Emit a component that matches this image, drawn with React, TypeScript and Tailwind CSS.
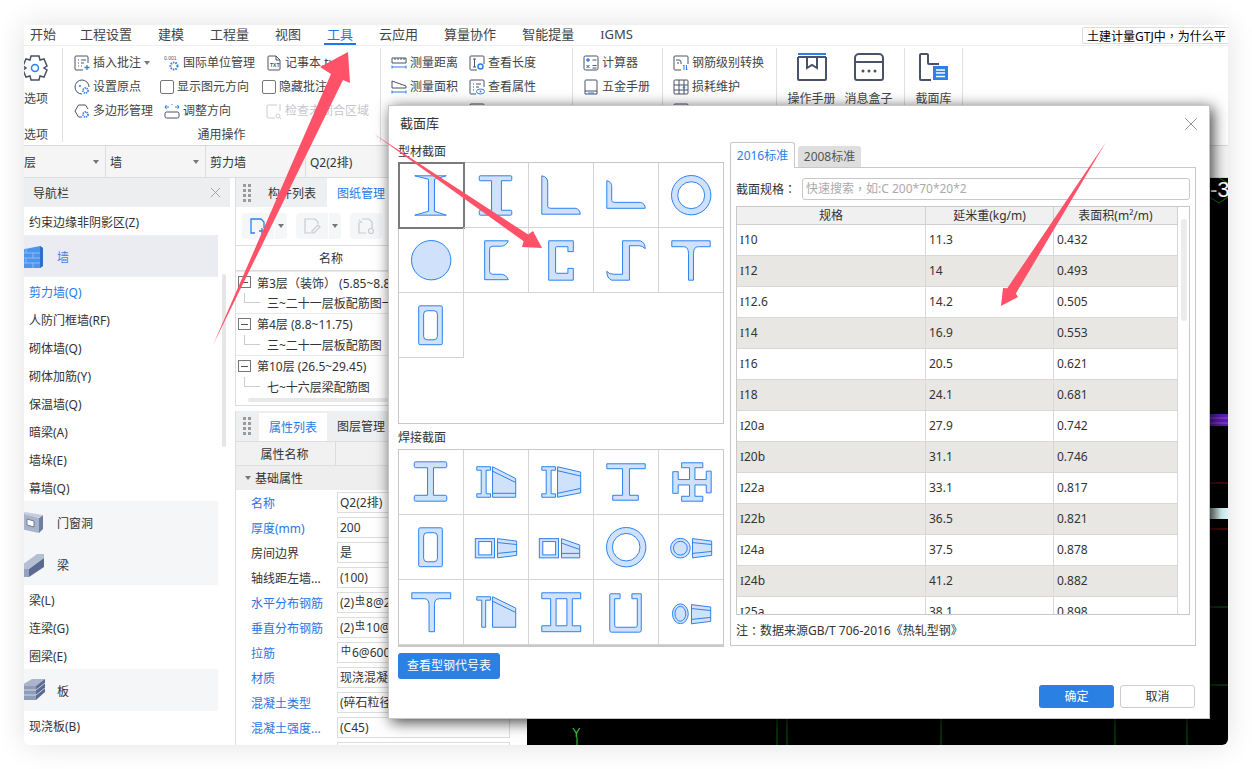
import type { ReactNode } from "react";
import { X } from "lucide-react";

const INK = "#4a5268";
const BLUE = "#2a80ee";

const Ico = ({ children, size = 16, view = 16 }: { children: ReactNode; size?: number; view?: number }) => (
  <svg width={size} height={size} viewBox={`0 0 ${view} ${view}`} fill="none" stroke={INK} strokeWidth="1" className="shrink-0">
    {children}
  </svg>
);

const icons: Record<string, ReactNode> = {
  insert: (
    <Ico>
      <path d="M9 15H2a1 1 0 0 1-1-1V2a1 1 0 0 1 1-1h11a1 1 0 0 1 1 1v6" />
      <path d="M4 5h1M7 5h5M4 8h1M7 8h3M4 11h1M7 11h1" />
      <path d="M13 10v5M10.500 12.500h5" stroke={BLUE} strokeWidth="1.300" />
    </Ico>
  ),
  unit: (
    <Ico>
      <text x="0" y="5" fontSize="5" fill={INK} stroke="none" fontFamily="Liberation Sans">0.001</text>
      <circle cx="10" cy="11" r="3.500" stroke={BLUE} strokeWidth="2" strokeDasharray="1.500 1" />
    </Ico>
  ),
  txt: (
    <Ico>
      <path d="M10 1H3a1 1 0 0 0-1 1v12a1 1 0 0 0 1 1h10a1 1 0 0 0 1-1V5z" />
      <path d="M10 1v4h4" />
      <text x="4" y="11.500" fontSize="5" fontWeight="700" fill={INK} stroke="none" fontFamily="Liberation Sans">TXT</text>
    </Ico>
  ),
  origin: (
    <Ico>
      <path d="M8 15a7 7 0 1 1 7-7" />
      <circle cx="6" cy="7" r="1" fill={BLUE} stroke="none" />
      <circle cx="11.500" cy="11.500" r="2.500" stroke={BLUE} strokeWidth="1.800" strokeDasharray="1.300 .8" />
    </Ico>
  ),
  poly: (
    <Ico>
      <path d="M8 14H4.500L1 8l3.500-6h7l2.500 4" />
      <circle cx="11.500" cy="11.500" r="2.500" stroke={BLUE} strokeWidth="1.800" strokeDasharray="1.300 .8" />
    </Ico>
  ),
  adjust: (
    <Ico>
      <rect x="1" y="9" width="14" height="6" rx="1.500" />
      <path d="M1 4h4M2.500 2 1 4l1.500 2M11 4h4M13.500 2 15 4l-1.500 2M8 1v1" stroke={BLUE} />
    </Ico>
  ),
  check: (
    <Ico>
      <g stroke="#c9ccd4">
        <path d="M9 15H2a1 1 0 0 1-1-1V3a1 1 0 0 1 1-1h9M14 1v7" />
        <circle cx="12" cy="13" r="2" />
        <path d="m13.500 14.500 1.500 1.500" />
      </g>
    </Ico>
  ),
  dist: (
    <Ico>
      <path d="M1 3h14v5H1zM4 3v2M7 3v2M10 3v2M13 3v2" />
      <path d="M1 12h14M1 10.500v3M15 10.500v3" stroke={BLUE} />
    </Ico>
  ),
  area: (
    <Ico>
      <path d="M1 9V2l14 5v2z" />
      <path d="M1 13h14M1 11.500v3M15 11.500v3" stroke={BLUE} />
    </Ico>
  ),
  len: (
    <Ico>
      <path d="M8 15H2a1 1 0 0 1-1-1V2a1 1 0 0 1 1-1h12a1 1 0 0 1 1 1v7" />
      <path d="M4 4h3M4 12h3M5.500 4v8" />
      <circle cx="11.500" cy="11.500" r="2.500" stroke={BLUE} strokeWidth="1.500" />
    </Ico>
  ),
  prop: (
    <Ico>
      <path d="M7 15H2a1 1 0 0 1-1-1V2a1 1 0 0 1 1-1h12a1 1 0 0 1 1 1v6" />
      <path d="M4 5h1M7 5h5M4 8h1M7 8h3M4 11h1" />
      <ellipse cx="11.500" cy="12.500" rx="4" ry="2.500" stroke={BLUE} />
      <circle cx="11.500" cy="12.500" r="1" fill={BLUE} stroke="none" />
    </Ico>
  ),
  calc: (
    <Ico>
      <rect x="1" y="1" width="14" height="14" rx="1.500" />
      <path d="M3 5h4M5 3v4" stroke={BLUE} strokeWidth="1.300" />
      <path d="M9.500 5h4M3.500 10l3 3M6.500 10l-3 3M9.500 10.500h4M9.500 13h4" />
    </Ico>
  ),
  manual: (
    <Ico>
      <path d="M2 15V2a1 1 0 0 1 1-1h10a1 1 0 0 1 1 1v13zM2 12h12" />
      <path d="M5 14h6" stroke={BLUE} />
    </Ico>
  ),
  grade: (
    <Ico>
      <path d="M8 15H2a1 1 0 0 1-1-1V2a1 1 0 0 1 1-1h12a1 1 0 0 1 1 1v7" />
      <path d="M3 5h3a2 2 0 0 1 2 2v2M4 8h2" />
      <path d="M11 10v5M13.500 15v-5M10 11l1-1M13.500 15l1-1" stroke={BLUE} />
    </Ico>
  ),
  loss: (
    <Ico>
      <rect x="1" y="1" width="14" height="14" rx="1" />
      <path d="M1 6h14M1 11h14M6 1v14M11 1v14" />
      <circle cx="11" cy="8.500" r="1.300" fill={BLUE} stroke="none" />
    </Ico>
  ),
};

// fullwidth punctuation sits centred in the TC cut, as in the screenshot
const P = ({ c }: { c: string }) => <span className="font-['Noto_Sans_CJK_TC']">{c}</span>;

const Item = ({ icon, label, muted, shift = 0 }: { icon?: string; label?: string; muted?: boolean; shift?: number }) => (
  <div className={`flex h-[24px] items-center gap-[3px] pt-[1px] whitespace-nowrap text-[12px] ${muted ? "text-[#c4c6cc]" : "text-[#444]"} ${shift ? "ml-[4px]" : ""}`}>
    {icon && icons[icon]}
    {label && <span className="pt-[1px]">{label}</span>}
  </div>
);

const Check = ({ label }: { label: string }) => (
  <div className="flex h-[24px] items-center gap-[3px] pt-[1px] whitespace-nowrap text-[12px] text-[#444]">
    <span className="h-[14px] w-[14px] rounded-[2px] border border-[#777] bg-white" />
    <span className="pt-[1px]">{label}</span>
  </div>
);

const Caret = () => <span className="inline-block h-0 w-0 border-x-[3px] border-t-[4px] border-x-transparent border-t-[#777]" />;

const Big = ({ label, children }: { label: string; children: ReactNode }) => (
  <div className="flex w-[57px] flex-col items-center pt-[4px] text-[12px] text-[#444]">
    <svg width="32" height="30" viewBox="0 0 32 30" fill="none" stroke={INK} strokeWidth="2">
      {children}
    </svg>
    <span className="mt-[8px] whitespace-nowrap">{label}</span>
  </div>
);

const Ribbon = () => (
  <div className="flex h-[100px] border-b border-[#d8d8d8] py-[2px]">
    <div className="flex h-[94px] w-[39px] flex-col border-r border-[#e0e0e0] text-[12px] text-[#444]">
      <svg width="26" height="28" viewBox="0 0 26 28" fill="none" stroke={INK} strokeWidth="1.500" className="mt-[6px] -ml-[2px]">
        <path d="M9 2h8l1 4 4-1 3 7-3 2 3 2-3 7-4-1-1 4H9l-1-4-4 1-3-7 3-2-3-2 3-7 4 1z" />
        <circle cx="13" cy="14" r="3.500" stroke={BLUE} />
      </svg>
      <span className="mt-[8px]">选项</span>
      <span className="mt-auto h-[16px] leading-[17px]">选项</span>
    </div>
    <div className="flex h-[94px] w-[318px] flex-col border-r border-[#e0e0e0]">
      <div className="flex pt-[2px] pl-[11px]">
        <div className="w-[86px]">
          <div className="flex h-[24px] items-center gap-[3px] pt-[1px] text-[12px] text-[#444]">{icons.insert}<span className="pt-[1px]">插入批注</span><Caret /></div>
          <Item icon="origin" label="设置原点" />
          <Item icon="poly" label="多边形管理" />
        </div>
        <div className="w-[102px]">
          <Item icon="unit" label="国际单位管理" shift={1} />
          <Check label="显示图元方向" />
          <Item icon="adjust" label="调整方向" shift={1} />
        </div>
        <div>
          <Item icon="txt" label="记事本.txt" shift={1} />
          <Check label="隐藏批注" />
          <Item icon="check" label="检查未闭合区域" muted shift={1} />
        </div>
      </div>
      <span className="mt-auto h-[16px] text-center text-[12px] leading-[17px] text-[#444]">通用操作</span>
    </div>
    <div className="flex h-[94px] w-[192px] border-r border-[#e0e0e0] pt-[2px] pl-[10px]">
      <div className="w-[78px]">
        <Item icon="dist" label="测量距离" />
        <Item icon="area" label="测量面积" />
        <Item icon="dist" />
      </div>
      <div>
        <Item icon="len" label="查看长度" />
        <Item icon="prop" label="查看属性" />
        <Item icon="len" />
      </div>
    </div>
    <div className="h-[94px] w-[90px] border-r border-[#e0e0e0] pt-[2px] pl-[10px]">
      <Item icon="calc" label="计算器" />
      <Item icon="manual" label="五金手册" />
    </div>
    <div className="h-[94px] w-[114px] border-r border-[#e0e0e0] pt-[2px] pl-[10px]">
      <Item icon="grade" label="钢筋级别转换" />
      <Item icon="loss" label="损耗维护" />
      <Item icon="grade" />
    </div>
    <div className="flex h-[94px] w-[128px] border-r border-[#e0e0e0] pl-[6px]">
      <Big label="操作手册">
        <path d="M2 5v22a1 1 0 0 0 1 1h26a1 1 0 0 0 1-1V5" />
        <path d="M2 2h28" stroke={BLUE} />
        <path d="M2 5h28" />
        <path d="M11 5v11l5-3 5 3V5" />
      </Big>
      <Big label="消息盒子">
        <path d="M2 10V6a4 4 0 0 1 4-4h20a4 4 0 0 1 4 4v4zM2 10v16a2 2 0 0 0 2 2h24a2 2 0 0 0 2-2V10" />
        <circle cx="10" cy="19" r="1.500" fill={INK} stroke="none" />
        <circle cx="16" cy="19" r="1.500" fill={INK} stroke="none" />
        <circle cx="22" cy="19" r="1.500" fill={INK} stroke="none" />
      </Big>
    </div>
    <div className="flex h-[94px] w-[58px] border-r border-[#e0e0e0]">
      <Big label="截面库">
        <path d="M13 28H3a1 1 0 0 1-1-1V3a1 1 0 0 1 1-1h6a1 1 0 0 1 1 1v8a1 1 0 0 0 1 1h10" />
        <path d="M15 14h15v14H15z" fill={BLUE} stroke="none" />
        <path d="M18 18h9M18 21h9M18 24.500h9" stroke="#fff" strokeWidth="1.600" />
      </Big>
    </div>
  </div>
);

const navRows = (names: string[], active?: string) =>
  names.map((n) => (
    <div key={n} className={`flex h-[28px] items-center pt-[4px] pl-[5px] text-[12px] ${n === active ? "text-[#1e7ce8]" : "text-[#333]"}`}>
      {n}
    </div>
  ));

const NavGroup = ({ label, bg, blue, children }: { label: string; bg: string; blue?: boolean; children: ReactNode }) => (
  <div className={`flex h-[42px] w-[194px] items-center text-[12px] ${bg} ${blue ? "text-[#4a7fe0]" : "text-[#333]"}`}>
    <svg width="26" height="26" viewBox="0 0 26 26" className="-ml-[5px] shrink-0">
      {children}
    </svg>
    <span className="ml-[12px] pt-[4px]">{label}</span>
  </div>
);

const Nav = () => (
  <div className="relative w-[206px] shrink-0">
    <div className="flex h-[29px] items-center justify-between bg-[#edeef0] pr-[6px] pl-[9px] text-[12px] text-[#333]">
      <span className="pt-[2px]">导航栏</span>
      <X size={17} color="#999" strokeWidth={1.200} />
    </div>
    {navRows(["约束边缘非阴影区(Z)"])}
    <NavGroup label="墙" bg="bg-[#ebecf1]" blue>
      <path d="M1 7l20-4 3 2v18l-3 2H1z" fill="#4d94ef" />
      <path d="M21 3l3 2v18l-3 2z" fill="#2f6fc4" />
      <path d="M1 10h20M1 15h20M1 20h20M7 5v5M14 10v5M7 15v5M14 20v5" stroke="#9cc4f7" strokeWidth=".8" />
    </NavGroup>
    {navRows(["剪力墙(Q)", "人防门框墙(RF)", "砌体墙(Q)", "砌体加筋(Y)", "保温墙(Q)", "暗梁(A)", "墙垛(E)", "幕墙(Q)"], "剪力墙(Q)")}
    <NavGroup label="门窗洞" bg="bg-[#f5f6f8]">
      <path d="M2 4l18 5v15L2 20z" fill="#a9b3c9" />
      <path d="M20 9l4-3v14l-4 4z" fill="#6f7da0" />
      <path d="M8 10l7 2v6l-7-2z" fill="#fff" stroke="#6f7da0" />
      <path d="M2 4l4-1 18 3-4 3z" fill="#c6cddc" />
    </NavGroup>
    <NavGroup label="梁" bg="bg-[#f5f6f8]">
      <path d="M3 14L18 3h7v4L10 18H3z" fill="#b5bfd3" />
      <path d="M10 18L25 7v9L10 26z" fill="#5b6a90" />
      <path d="M3 18h7v8H3z" fill="#95a2bf" />
    </NavGroup>
    {navRows(["梁(L)", "连梁(G)", "圈梁(E)"])}
    <NavGroup label="板" bg="bg-[#f5f6f8]">
      <path d="M3 8l10-6h13L17 9H3z" fill="#aab5cb" />
      <path d="M3 9h14v14H3z" fill="#8e9cba" />
      <path d="M17 9l9-7v13l-9 8z" fill="#5b6a90" />
      <path d="M3 13h14l9-7M3 18h14l9-7" stroke="#e3e7ef" fill="none" strokeWidth=".8" />
    </NavGroup>
    {navRows(["现浇板(B)"])}
    <span className="absolute top-[96px] left-[198px] h-[173px] w-[4px] rounded-full bg-[#e6e6e6]" />
  </div>
);

const Grip = () => (
  <div className="grid w-[8px] grid-cols-2 gap-[2px]">
    {[0, 1, 2, 3, 4, 5, 6, 7].map((i) => (
      <span key={i} className="h-[3px] w-[3px] bg-[#9a9a9a]" />
    ))}
  </div>
);

const ToolBtn = ({ wide, children }: { wide?: boolean; children: ReactNode }) => (
  <div className={`flex h-[26px] items-center rounded-[4px] bg-[#f5f6f8] ${wide ? "w-[45px]" : "w-[32px]"} justify-center`}>
    <div className="flex w-[32px] justify-center">{children}</div>
    {wide && (
      <div className="flex h-full flex-1 items-center justify-center border-l border-white">
        <Caret />
      </div>
    )}
  </div>
);

const tree: [ReactNode, string][] = [
  [<>第3层<P c="（" />装饰<P c="）" /> (5.85~8.8)</>, "三~二十一层板配筋图一"],
  ["第4层 (8.8~11.75)", "三~二十一层板配筋图"],
  ["第10层 (26.5~29.45)", "七~十六层梁配筋图"],
];

const TopPanel = () => (
  <div className="h-[228px] shrink-0 overflow-hidden border-r border-b border-l border-[#ddd]">
    <div className="flex h-[29px] items-center bg-[#eeeff1] text-[12px]">
      <div className="ml-[7px]"><Grip /></div>
      <span className="ml-[17px] w-[59px] pt-[2px] text-[#333]">构件列表</span>
      <div className="flex h-full flex-1 items-center bg-white pt-[2px] pl-[10px] text-[#1e7ce8]">图纸管理</div>
    </div>
    <div className="flex h-[39px] items-center gap-[9px] border-b border-[#ddd] pl-[6px]">
      <ToolBtn wide>
        <svg width="18" height="18" viewBox="0 0 18 18" fill="none" stroke={BLUE} strokeWidth="1.300">
          <path d="M6 16H2V2h10l3 3v6M2 16M13 11v6M10 14h6" />
        </svg>
      </ToolBtn>
      <ToolBtn wide>
        <svg width="18" height="18" viewBox="0 0 18 18" fill="none" stroke="#c9ccd4" strokeWidth="1.200">
          <path d="M8 16H2V2h10l3 3v2M9 14l6-6 2 2-6 6H9z" />
        </svg>
      </ToolBtn>
      <ToolBtn>
        <svg width="18" height="18" viewBox="0 0 18 18" fill="none" stroke="#c9ccd4" strokeWidth="1.200">
          <path d="M9 16H2V5M2 3l3 3M5 2h7l3 3v7" />
          <circle cx="14" cy="14" r="2.500" />
        </svg>
      </ToolBtn>
    </div>
    <div className="flex h-[25px] items-center border-b border-[#ddd] pt-[2px] pl-[83px] text-[12px] text-[#333]">名称</div>
    <div className="h-[126px] whitespace-nowrap text-[12px] text-[#333]">
      {tree.map(([parent, child], i) => (
        <div key={i}>
          <div className="flex h-[21px] items-center border-t border-[#e8e8e8] pl-[2px]">
            <span className="flex h-[12px] w-[13px] items-center justify-center border border-[#777] bg-white">
              <span className="h-px w-[7px] bg-[#555]" />
            </span>
            <span className="ml-[6px] pt-[2px]">{parent}</span>
          </div>
          <div className="flex h-[21px] items-center pl-[8px]">
            <span className="h-[10px] w-[16px] -translate-y-[5px] border-b border-l border-[#ccc]" />
            <span className="ml-[7px] pt-[2px]">{child}</span>
          </div>
        </div>
      ))}
    </div>
    <div className="mt-[1px] ml-[12px] h-[4px] w-[140px] rounded-full bg-[#e8e8e8]" />
  </div>
);

const Rebar = ({ c }: { c: string }) => <span className="mx-[1px] align-[3px] text-[10px]">{c}</span>;

const props: [string, ReactNode, boolean][] = [
  ["名称", "Q2(2排)", true],
  ["厚度(mm)", "200", true],
  ["房间边界", "是", false],
  ["轴线距左墙...", "(100)", false],
  ["水平分布钢筋", <>(2)<Rebar c="虫" />8@200</>, true],
  ["垂直分布钢筋", <>(2)<Rebar c="虫" />10@200</>, true],
  ["拉筋", <><Rebar c="中" />6@600*600</>, true],
  ["材质", "现浇混凝土", true],
  ["混凝土类型", "(碎石粒径)", true],
  ["混凝土强度...", "(C45)", true],
  ["", "", false],
];

const BottomPanel = () => (
  <div className="mt-[5px] flex-1 border-l border-[#ddd] text-[12px]">
    <div className="flex h-[30px] items-center bg-[#eeeff1]">
      <div className="ml-[7px]"><Grip /></div>
      <div className="mt-[2px] ml-[8px] flex h-[28px] w-[68px] items-center justify-center bg-white pt-[2px] text-[#1e7ce8]">属性列表</div>
      <span className="ml-[10px] pt-[2px] text-[#333]">图层管理</span>
    </div>
    <div className="flex h-[25px] border-t border-b border-[#ddd] bg-[#f1f1f1] text-[#333]">
      <div className="flex w-[100px] items-center justify-center border-r border-[#ddd] pt-[2px] pr-[2px]">属性名称</div>
    </div>
    <div className="flex h-[24px] items-center bg-[#eeeeee] pl-[9px] text-[#333]">
      <Caret />
      <span className="ml-[4px] pt-[2px]">基础属性</span>
    </div>
    {props.map(([label, value, link], i) => (
      <div key={i} className="flex h-[25px] items-center">
        <span className={`w-[101px] pt-[2px] pl-[15px] ${link ? "text-[#2b74e6]" : "text-[#333]"}`}>{label}</span>
        <div className="flex h-[21px] w-[173px] items-center overflow-hidden border border-[#ddd] pl-[2px] whitespace-nowrap text-[#333]">
          <span>{value}</span>
        </div>
      </div>
    ))}
  </div>
);

const Canvas = () => (
  <div className="ml-[7px] flex-1 bg-black">
    <svg width="701" height="567" viewBox="0 0 701 567">
      <defs>
        <linearGradient id="bar" x1="0" x2="1" y1="0" y2="0">
          <stop offset="0" stopColor="#9aa8a8" />
          <stop offset="0.6" stopColor="#d8f6f6" />
        </linearGradient>
      </defs>
      <path d="M692 0l9 5v14l-9 6-8-5" fill="none" stroke="#0a7a0a" />
      <text x="683" y="19" fontSize="22" fill="#fff" fontFamily="Liberation Sans">-3</text>
      <rect x="683" y="236" width="18" height="12" fill="#5a1fb0" />
      <path d="M683 240h18M683 245h18" stroke="#9a45f0" />
      <path d="M683 305h18M683 351h18" stroke="#8a0f0f" />
      <rect x="683" y="330" width="18" height="11" fill="url(#bar)" />
      <path d="M683 429h18M683 507h18" stroke="#0b5d0b" />
      <path d="M250 541v26M260 541v26M414 541v26M588 541v26M660 541v26" stroke="#0b5d0b" />
      <path d="M50 559v8" stroke="#3fd43f" />
      <text x="45" y="559" fontSize="13" fill="#3fd43f" fontFamily="Liberation Sans">Y</text>
    </svg>
  </div>
);

const Sec = ({ children }: { children: ReactNode }) => (
  <svg viewBox="0 0 65 65" className="h-full w-full" fill="#d0e2fb" stroke={BLUE} strokeWidth="1">
    {children}
  </svg>
);

const tube = (
  <>
    <rect x="20" y="13" width="24" height="39.500" rx="1.500" />
    <rect x="25" y="18" width="14" height="29.500" rx="3.500" fill="#fff" />
  </>
);

const typeSections: ReactNode[] = [
  <path d="M16 13h32l-12 3.500V49L48 53H16l14-4V16.500z" />,
  <path d="M16.500 13h31q1 0 1 1v3q0 1-1 1H38v30h9.500q1 0 1 1v3q0 1-1 1h-31q-1 0-1-1v-3q0-1 1-1H28V18H16.500q-1 0-1-1v-3q0-1 1-1z" />,
  <path d="M13 13q6 1 6 7v24q0 2 3 2h25q5 1 5 6H13z" />,
  <path d="M13 18q5 1 5 6v14q0 2 3 2h26q5 1 5 6H13z" />,
  <>
    <circle cx="32.700" cy="32.700" r="20" />
    <circle cx="32.700" cy="32.700" r="13.700" fill="#fff" />
  </>,
  <circle cx="32.700" cy="32.700" r="20" />,
  <path d="M21 13h24q-2 5-7 5.500h-9q-3 0-3 3v22.500q0 3 3 3h9q5 .5 7 5.500H21z" />,
  <path d="M20 13h25v11h-5.500v-5H28q-1 0-1 1v25q0 1 1 1h11.500v-5H45v12H20z" />,
  <path d="M29 13h18q5 2 5 8-3-3-6-3H36v35H18q-5-2-5-9 2 3 7 3h9z" />,
  <path d="M13 13h39v6H40q-5 0-5 7v27h-5V26q0-7-5-7H13z" />,
  tube,
];

const SmallI = ({ x = 13 }: { x?: number }) => (
  <path transform={`translate(${x} 17)`} d="M0 0h14v3.500H9.500v24H14V31H0v-3.500h4.500v-24H0z" />
);

const Wedge = ({ x, w, top, bot, in1, in2 }: { x: number; w: number; top: [number, number]; bot: [number, number]; in1: [number, number]; in2: [number, number] }) => (
  <>
    <path d={`M${x} ${top[0]}L${x + w} ${top[1]}V${bot[1]}L${x} ${bot[0]}z`} />
    <path d={`M${x} ${in1[0]}L${x + w} ${in1[1]}M${x} ${in2[0]}L${x + w} ${in2[1]}`} fill="none" />
  </>
);

const weldedSections: ReactNode[] = [
  <path d="M17 12h30q1.500 0 1.500 1.500v3q0 1.500-1.500 1.500H35v28h12q1.500 0 1.500 1.500v3q0 1.500-1.500 1.500H17q-1.500 0-1.500-1.500v-3Q15.500 46 17 46h12V18H17q-1.500 0-1.500-1.500v-3Q15.500 12 17 12z" />,
  <>
    <SmallI />
    <Wedge x={29} w={23.500} top={[17, 29]} bot={[48, 48]} in1={[21.500, 33]} in2={[44, 44]} />
  </>,
  <>
    <SmallI />
    <Wedge x={29} w={23.500} top={[17, 22.500]} bot={[48, 43.500]} in1={[21, 26.500]} in2={[44, 39]} />
  </>,
  <path d="M13 14h39v5H36v27h9v5H19v-5h10V19H13z" />,
  <path d="M23 13h21.500v5H36.500v12H48v-8.500h5v22h-5V35.500H36.500V47h8v5H23v-5h8V35.500H19.500V44H14V22h5.500v8H31V18h-8z" />,
  tube,
  <>
    <rect x="11.500" y="24" width="19.500" height="19.500" />
    <rect x="15" y="27" width="13" height="13.500" fill="#fff" />
    <Wedge x={34} w={19.500} top={[24, 26.500]} bot={[43.500, 41]} in1={[28, 30]} in2={[39, 37]} />
  </>,
  <>
    <rect x="10.500" y="24" width="19.500" height="19.500" />
    <rect x="14" y="27" width="13" height="13.500" fill="#fff" />
    <Wedge x={33} w={18.500} top={[24, 30.500]} bot={[43.500, 43.500]} in1={[28.500, 35]} in2={[39, 39]} />
  </>,
  <>
    <circle cx="32.700" cy="32.700" r="20" />
    <circle cx="32.700" cy="32.700" r="14" fill="#fff" />
  </>,
  <>
    <circle cx="21.700" cy="33.700" r="10" />
    <circle cx="21.700" cy="33.700" r="7" />
    <Wedge x={34} w={19.500} top={[24, 26.500]} bot={[43.500, 41]} in1={[28, 30]} in2={[39, 37]} />
  </>,
  <path d="M13 13h39.500v6H41q-5 0-5 6v27.500h-5.500V25q0-6-5-6H13z" />,
  <>
    <path d="M13 17h14v3.500h-5V48h-4V20.500h-5z" />
    <path d="M29 17l23.500 11.500V48H29z" />
    <path d="M29 21.500L52.500 33" fill="none" />
  </>,
  <path d="M13 13h39.500v6H44v27.500h8.500v6H13v-6h9V19h-9zM27.500 19v27.500h11V19z" fillRule="evenodd" />,
  <path d="M17 14h9.500v5H21v27q0 2 2 2h19q2 0 2-2V19h-5.500v-5H48v37q0 2-2 2H18q-2 0-2-2V15q0-1 1-1z" />,
  <>
    <ellipse cx="21.700" cy="34.300" rx="8" ry="10" />
    <ellipse cx="21.700" cy="34.300" rx="5.500" ry="7.500" />
    <Wedge x={33} w={19.500} top={[25, 27.500]} bot={[44.500, 42]} in1={[29, 31]} in2={[40, 38]} />
  </>,
];

const SectionGrid = ({ items, first }: { items: ReactNode[]; first?: boolean }) => (
  <div className="grid grid-cols-[65px_65px_65px_65px_64px]">
    {items.map((s, i) => (
      <div
        key={i}
        className={`h-[65px] border-r border-b border-[#d4d4d4] ${i % 5 === 4 ? "border-r-0" : ""} ${first && i === 0 ? "outline-2 -outline-offset-1 outline-[#7a7a7a]" : ""}`}
      >
        <Sec>{s}</Sec>
      </div>
    ))}
  </div>
);

const specs: [string, string, string][] = [
  ["I10", "11.3", "0.432"],
  ["I12", "14", "0.493"],
  ["I12.6", "14.2", "0.505"],
  ["I14", "16.9", "0.553"],
  ["I16", "20.5", "0.621"],
  ["I18", "24.1", "0.681"],
  ["I20a", "27.9", "0.742"],
  ["I20b", "31.1", "0.746"],
  ["I22a", "33.1", "0.817"],
  ["I22b", "36.5", "0.821"],
  ["I24a", "37.5", "0.878"],
  ["I24b", "41.2", "0.882"],
  ["I25a", "38.1", "0.898"],
];

const SpecTable = () => (
  <div className="relative mt-[6px] h-[409px] overflow-hidden border border-[#c8c8c8]">
    <div className="grid w-[441px] grid-cols-[189px_128px_124px] border-b border-[#d0d0d0] bg-[#f0f0f0] text-center">
      {["规格", "延米重(kg/m)", "表面积(m²/m)"].map((h) => (
        <div key={h} className="h-[17px] border-r border-[#d0d0d0] leading-[17px]">{h}</div>
      ))}
    </div>
    {specs.map(([name, weight, area], i) => (
      <div key={name} className={`grid h-[31px] w-[441px] grid-cols-[189px_128px_124px] border-b border-[#d8d8d8] ${i % 2 ? "bg-[#e8e7e4]" : "bg-white"}`}>
        <div className="flex items-center border-r border-[#d8d8d8] pl-[3px]">
          <span className="font-['Liberation_Serif']">I</span>{name.slice(1)}
        </div>
        <div className="flex items-center border-r border-[#d8d8d8] pl-[3px]">{weight}</div>
        <div className="flex items-center border-r border-[#d8d8d8] pl-[3px]">{area}</div>
      </div>
    ))}
    <span className="absolute top-[12px] right-[2px] h-[102px] w-[6px] rounded-full bg-[#ececec]" />
  </div>
);

const Dialog = () => (
  <div className="absolute top-[80px] left-[364px] z-10 flex h-[614px] w-[822px] flex-col border border-[#c8c8c8] bg-white text-[12px] text-[#333] shadow-[3px_3px_14px_rgba(0,0,0,0.75)]">
    <div className="flex h-[34px] items-center justify-between pt-[2px] pr-[7px] pl-[11px]">
      <span className="text-[13px]">截面库</span>
      <X size={22} color="#8a8a8a" strokeWidth={1} />
    </div>
    <div className="flex">
      <div className="ml-[9px] w-[326px]">
        <div className="flex h-[22px] items-center pt-[2px]">型材截面</div>
        <div className="h-[262px] border border-[#c8c8c8]">
          <SectionGrid items={typeSections} first />
        </div>
        <div className="flex h-[25px] items-center pt-[2px]">焊接截面</div>
        <div className="border border-b-2 border-[#c8c8c8]">
          <SectionGrid items={weldedSections} />
        </div>
        <button className="mt-[6px] flex h-[26px] w-[102px] items-center justify-center rounded-[3px] bg-[#2b80e4] text-white">查看型钢代号表</button>
      </div>
      <div className="mt-[2px] ml-[6px] w-[466px]">
        <div className="flex h-[25px] items-end gap-[3px]">
          <div className="relative -mb-px flex h-[26px] w-[65px] items-center justify-center rounded-t-[3px] border border-b-0 border-[#c8c8c8] bg-white text-[#2b80e4]">2016标准</div>
          <div className="flex h-[21px] w-[63px] items-center justify-center rounded-t-[3px] bg-[#dedede] text-[#555]">2008标准</div>
        </div>
        <div className="border border-[#c8c8c8] px-[5px] pt-[10px]">
          <div className="flex h-[22px] items-center">
            <span className="w-[66px]">截面规格<P c="：" /></span>
            <span className="flex h-[22px] flex-1 items-center rounded-[3px] border border-[#c8c8c8] pl-[3px] text-[#aaa]">快速搜索<P c="，" />如:C 200*70*20*2</span>
          </div>
          <SpecTable />
          <div className="flex h-[30px] items-center pt-[2px]">注<P c="：" />数据来源GB/T 706-2016《热轧型钢》</div>
        </div>
      </div>
    </div>
    <div className="flex justify-end gap-[6px] pt-[6px] pr-[14px]">
      <button className="flex h-[23px] w-[75px] items-center justify-center rounded-[3px] bg-[#2b80e4] text-white">确定</button>
      <button className="flex h-[23px] w-[75px] items-center justify-center rounded-[3px] border border-[#ccc] bg-white">取消</button>
    </div>
  </div>
);

const menus = ["开始", "工程设置", "建模", "工程量", "视图", "工具", "云应用", "算量协作", "智能提量"];

const Arrows = () => (
  <svg width="1252" height="769" viewBox="0 0 1252 769" fill="#ff5268" className="pointer-events-none absolute top-0 left-0 z-20">
    <path d="M213 345 331 74 320 67 348 52 350 83 343 80z" />
    <path d="M374 134 528.200 234.600 533 231 542 248 522 247 523.600 241.200z" />
    <path d="M1106 142 1015.900 293.400 1018 297 1001 306 1003 288 1007.300 288.200z" />
  </svg>
);

export default function App() {
  return (
    <div className="relative h-[769px] w-[1252px] overflow-hidden bg-white pt-[25px] pl-[24px] font-['Noto_Sans','Noto_Sans_CJK_SC',sans-serif]">
      <div className="relative flex h-[720px] w-[1204px] flex-col rounded-b-[6px] bg-white shadow-[0_0_30px_rgba(0,0,0,0.12)]">
        <div className="flex h-full flex-col overflow-hidden rounded-b-[6px]">
          <div className="flex h-[21px] shrink-0 items-center gap-[26px] border-b border-[#eee] pl-[6px] text-[13px] text-[#444]">
            {menus.map((m) =>
              m === "工具" ? (
                <span key={m} className="-mx-[3px] h-[20px] border-b-2 border-[#1e78e6] px-[3px] leading-[19px] text-[#1e78e6]">{m}</span>
              ) : (
                <span key={m} className={m === "开始" ? "-mr-[2px]" : ""}>{m}</span>
              ),
            )}
            <span><span className="font-['Liberation_Serif']">I</span>GMS</span>
            <div className="mt-[1px] ml-auto h-[17px] w-[146px] overflow-hidden rounded-l-[2px] border-t border-b border-l border-[#ddd] pl-[4px] text-[12px] leading-[15px] whitespace-nowrap text-black">土建计量GTJ中<P c="，" />为什么平</div>
          </div>
          <Ribbon />
          <div className="flex h-[32px] shrink-0 items-center border-b border-[#ddd] bg-[#f5f5f5] text-[12px] text-[#333]">
            <div className="flex h-full w-[82px] items-center justify-between border-r border-[#ddd] pr-[6px]"><span className="pt-[2px]">层</span><Caret /></div>
            <div className="flex h-full w-[100px] items-center justify-between border-r border-[#ddd] pr-[6px] pl-[4px]"><span className="pt-[2px]">墙</span><Caret /></div>
            <div className="flex h-full w-[100px] items-center border-r border-[#ddd] pt-[2px] pl-[4px]">剪力墙</div>
            <div className="flex h-full w-[100px] items-center border-r border-[#ddd] pt-[2px] pl-[4px]">Q2(2排)</div>
          </div>
          <div className="flex min-h-0 flex-1">
            <Nav />
            <div className="ml-[5px] flex w-[285px] shrink-0 flex-col overflow-hidden">
              <TopPanel />
              <BottomPanel />
            </div>
            <Canvas />
          </div>
        </div>
        <Dialog />
      </div>
      <Arrows />
    </div>
  );
}
